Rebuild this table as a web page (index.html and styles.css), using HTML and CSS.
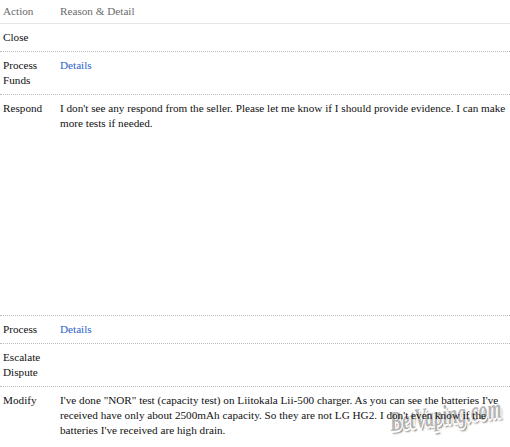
FILE: index.html
```html
<!DOCTYPE html>
<html>
<head>
<meta charset="utf-8">
<link rel="stylesheet" href="styles.css">
</head>
<body>
<div class="watermark">BetVaping.com</div>
<div class="table">
  <div class="row head">
    <div class="cell">Action</div>
    <div class="cell">Reason &amp; Detail</div>
  </div>
  <div class="row">
    <div class="cell">Close</div>
    <div class="cell"></div>
  </div>
  <div class="row">
    <div class="cell">Process Funds</div>
    <div class="cell"><a class="link" href="#">Details</a></div>
  </div>
  <div class="row">
    <div class="cell">Respond</div>
    <div class="cell">I don't see any respond from the seller. Please let me know if I should provide evidence. I can make more tests if needed.<div class="attach"></div></div>
  </div>
  <div class="row">
    <div class="cell">Process</div>
    <div class="cell"><a class="link" href="#">Details</a></div>
  </div>
  <div class="row">
    <div class="cell">Escalate Dispute</div>
    <div class="cell"></div>
  </div>
  <div class="row last">
    <div class="cell">Modify</div>
    <div class="cell">I've done "NOR" test (capacity test) on Liitokala Lii-500 charger. As you can see the batteries I've received have only about 2500mAh capacity. So they are not LG HG2. I don't even know if the batteries I've received are high drain.</div>
  </div>
</div>
</body>
</html>
```
FILE: styles.css
```css
html, body {
  margin: 0;
  padding: 0;
  background: #fff;
}
body {
  font-family: "Liberation Serif", "Times New Roman", serif;
  font-size: 11.2px;
  line-height: 15px;
  color: #111;
  width: 510px;
  height: 447px;
  overflow: hidden;
  position: relative;
}
.table {
  display: flex;
  flex-direction: column;
  position: relative;
  z-index: 1;
}
.row {
  display: grid;
  grid-template-columns: 57px 1fr;
  border-bottom: 1px dotted #bdbdbd;
}
.row.head {
  border-bottom: 1px solid #e6e6e6;
  color: #6b6b6b;
}
.row.head .cell {
  padding: 4px 3px;
}
.row.last {
  border-bottom: none;
}
.cell {
  padding: 6px 3px;
}
.link {
  color: #2a63c8;
  text-decoration: none;
}
.attach {
  height: 178px;
}
.watermark {
  position: absolute;
  z-index: 0;
  left: 390px;
  top: 407px;
  font-family: "Liberation Serif", serif;
  font-style: italic;
  font-weight: bold;
  font-size: 28px;
  line-height: 30px;
  color: #b4b4b4;
  text-shadow:
    -1px -1px 0 #fff, 1px -1px 0 #fff, -1px 1px 0 #fff, 1px 1px 0 #fff,
    0 2px 0 #fff, 2px 0 0 #fff,
    2px 3px 2px rgba(0,0,0,0.5);
  transform-origin: left center;
  transform: rotate(-7deg) scaleX(0.64);
  white-space: nowrap;
}
```
